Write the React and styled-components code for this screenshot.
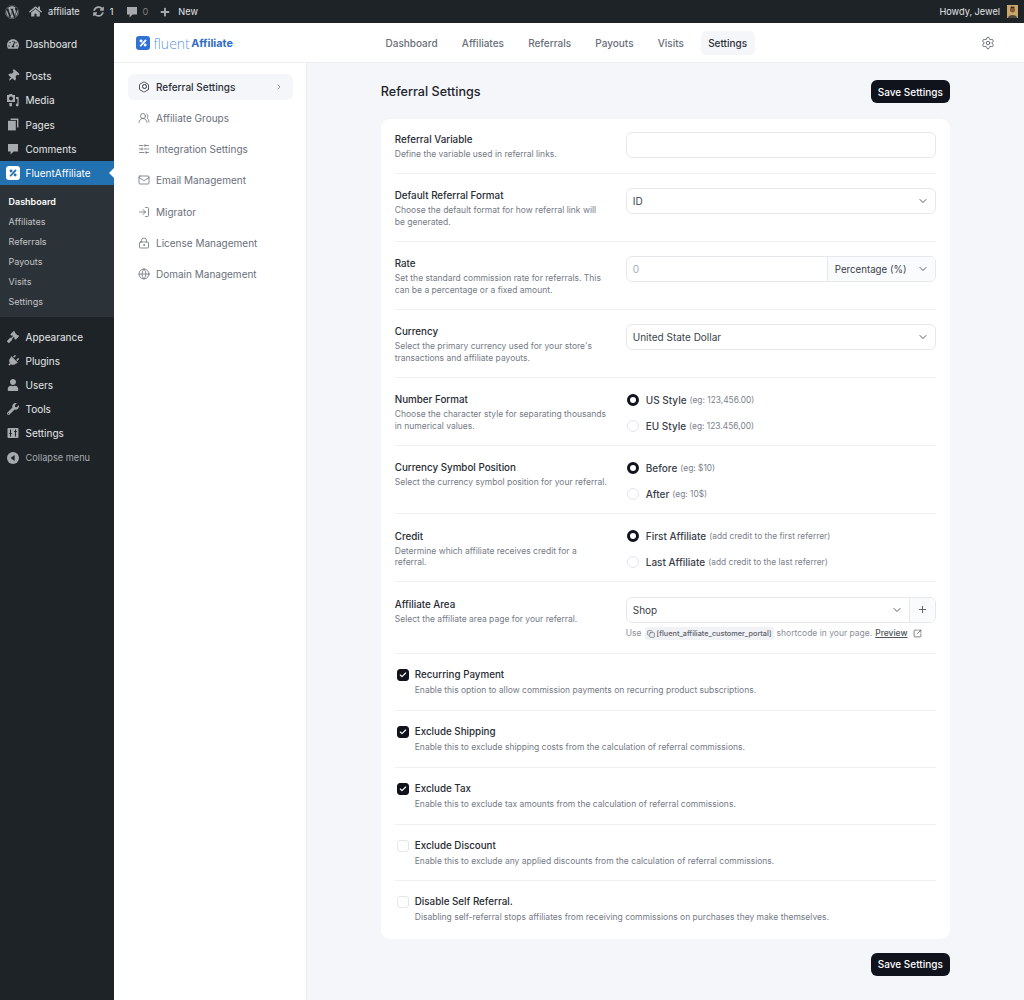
import React from 'react';
import styled, { createGlobalStyle } from 'styled-components';
import {
  FaWordpress, FaHome, FaSyncAlt, FaPlus, FaTachometerAlt, FaThumbtack,
  FaPlug, FaUser, FaWrench, FaGavel,
} from 'react-icons/fa';
import {
  ChevronDown, ChevronRight, Check, Copy, Globe, Hexagon, LockKeyhole, LogIn, Mail, Plus, Settings,
  SlidersHorizontal, SquareArrowOutUpRight, UsersRound,
} from 'lucide-react';

const GlobalStyle = createGlobalStyle`
  html, body { margin: 0; padding: 0; background: #f4f6fa; }
  body { font-family: Inter, "Noto Sans", sans-serif; }
  * { box-sizing: border-box; }
`;

const PercentMark = ({ size = 16, color = '#fff', bg = '#2f72d6' }) => (
  <svg width={size} height={size} viewBox="0 0 16 16">
    <rect width="16" height="16" rx="3.5" fill={bg} />
    <circle cx="5.8" cy="5.8" r="1.7" fill={color} />
    <circle cx="10.4" cy="10.4" r="1.7" fill={color} />
    <path d="M10.6 3.8 L12.2 5 L5.6 12.2 L4 11 Z" fill={color} />
  </svg>
);

const CollapseIcon = () => (
  <svg width="12" height="12" viewBox="0 0 12 12">
    <circle cx="6" cy="6" r="6" fill="#a7aaad" />
    <path d="M7.6 3 L7.6 9 L3.6 6 Z" fill="#1d2327" />
  </svg>
);

const SettingsBoxIcon = () => (
  <svg width="12" height="12" viewBox="0 0 12 12">
    <rect x="0.5" y="1" width="11" height="10" rx="1" fill="#a7aaad" />
    <path d="M3.5 2.5 V9.5 M8.5 2.5 V9.5 M2.2 6.5 H4.8 M7.2 4.5 H9.8" stroke="#1d2327" strokeWidth="1" />
  </svg>
);

const BubbleIcon = ({ size = 12 }) => (
  <svg width={size} height={size} viewBox="0 0 12 12" fill="currentColor">
    <path d="M1 1 H11 V8.6 H6.6 L3.6 11.6 V8.6 H1 Z" />
  </svg>
);

const MediaIcon = () => (
  <svg width="13" height="13" viewBox="0 0 13 13" fill="#a7aaad">
    <path fillRule="evenodd" d="M1 1 H3 L3.6 0 H6 L6.6 1 H9 V8 H1 Z M5 2.6 A1.9 1.9 0 1 0 5 6.4 A1.9 1.9 0 1 0 5 2.6 Z" />
    <path d="M10 3 H12.6 V11 A1.4 1.4 0 1 1 11.4 9.6 V5 H10 Z" />
    <path d="M3 9 H6 V11 A1.4 1.4 0 1 1 4.8 9.8 H3 Z" />
  </svg>
);

const PagesIcon = () => (
  <svg width="12" height="13" viewBox="0 0 12 13" fill="#a7aaad">
    <path d="M3.6 0.5 H11.4 V9.6 H10 V2 H3.6 Z" />
    <path d="M1 2.8 H8.8 V12.4 H1 Z" />
  </svg>
);

const PinIcon = styled(FaThumbtack)`
  transform: rotate(40deg);
`;

const PlugIcon = styled(FaPlug)`
  transform: rotate(45deg);
`;

const Avatar = () => (
  <svg width="11" height="13" viewBox="0 0 11 13">
    <rect width="11" height="13" fill="#c9a86a" />
    <circle cx="5.5" cy="4.8" r="2.6" fill="#8a5a3a" />
    <rect x="3.6" y="1.6" width="3.8" height="1.6" fill="#3b2a1f" />
    <path d="M1 13 C1 9 10 9 10 13 Z" fill="#4b4a3f" />
  </svg>
);

const topMenu = [
  { label: 'Dashboard', Icon: FaTachometerAlt, gapAfter: true },
  { label: 'Posts', Icon: PinIcon },
  { label: 'Media', Icon: MediaIcon },
  { label: 'Pages', Icon: PagesIcon },
  { label: 'Comments', Icon: BubbleIcon },
];

const lowerMenu = [
  { label: 'Appearance', Icon: FaGavel },
  { label: 'Plugins', Icon: PlugIcon },
  { label: 'Users', Icon: FaUser },
  { label: 'Tools', Icon: FaWrench },
  { label: 'Settings', Icon: SettingsBoxIcon },
];

const subMenu = ['Dashboard', 'Affiliates', 'Referrals', 'Payouts', 'Visits', 'Settings'];
const navItems = ['Dashboard', 'Affiliates', 'Referrals', 'Payouts', 'Visits', 'Settings'];

const settingsNav = [
  { label: 'Referral Settings', Icon: Hexagon, active: true },
  { label: 'Affiliate Groups', Icon: UsersRound },
  { label: 'Integration Settings', Icon: SlidersHorizontal },
  { label: 'Email Management', Icon: Mail },
  { label: 'Migrator', Icon: LogIn },
  { label: 'License Management', Icon: LockKeyhole },
  { label: 'Domain Management', Icon: Globe },
];

const toggles = [
  { title: 'Recurring Payment', desc: 'Enable this option to allow commission payments on recurring product subscriptions.', checked: true },
  { title: 'Exclude Shipping', desc: 'Enable this to exclude shipping costs from the calculation of referral commissions.', checked: true },
  { title: 'Exclude Tax', desc: 'Enable this to exclude tax amounts from the calculation of referral commissions.', checked: true },
  { title: 'Exclude Discount', desc: 'Enable this to exclude any applied discounts from the calculation of referral commissions.' },
  { title: 'Disable Self Referral.', desc: 'Disabling self-referral stops affiliates from receiving commissions on purchases they make themselves.' },
];

const RadioGroup = ({ options }) => (
  <Radios>
    {options.map((o, i) => (
      <RadioRow key={o.label}>
        <RadioDot selected={i === 0} />
        <RadioLabel>{o.label}</RadioLabel>
        <RadioHint>{o.hint}</RadioHint>
      </RadioRow>
    ))}
  </Radios>
);

const Field = ({ title, desc, children }) => (
  <Row>
    <FieldText>
      <Title>{title}</Title>
      <Desc>{desc}</Desc>
    </FieldText>
    <Control>{children}</Control>
  </Row>
);

const SelectBox = ({ value }) => (
  <Select>
    <span>{value}</span>
    <ChevronDown size={12} color="#555b66" />
  </Select>
);

export default function App() {
  return (
    <>
      <GlobalStyle />
      <AdminBar>
        <BarGroup>
          <BarIcon $w={14}><FaWordpress size={14} /></BarIcon>
          <BarIcon $w={13} $ml={10}><FaHome size={13} /></BarIcon>
          <BarText $ml={6}>affiliate</BarText>
          <BarIcon $w={12} $ml={13}><FaSyncAlt size={11} /></BarIcon>
          <BarText $ml={5}>1</BarText>
          <BarIcon $w={12} $ml={13}><BubbleIcon size={12} /></BarIcon>
          <BarDim $ml={4}>0</BarDim>
          <BarIcon $w={11} $ml={11.5}><FaPlus size={10} /></BarIcon>
          <BarText $ml={7.5}>New</BarText>
        </BarGroup>
        <BarGroup>
          <BarText>Howdy, Jewel</BarText>
          <AvatarWrap><Avatar /></AvatarWrap>
        </BarGroup>
      </AdminBar>
      <Shell>
        <WpSidebar>
          <MenuList>
            {topMenu.map(({ label, Icon, gapAfter }) => (
              <MenuItem key={label} $gapAfter={gapAfter}>
                <MenuIcon><Icon size={12} /></MenuIcon>
                {label}
              </MenuItem>
            ))}
            <ActiveItem>
              <MenuIcon><PercentMark size={14} color="#2271b1" bg="#fff" /></MenuIcon>
              FluentAffiliate
            </ActiveItem>
            <SubMenu>
              {subMenu.map((s, i) => <SubItem key={s} $current={i === 0}>{s}</SubItem>)}
            </SubMenu>
            {lowerMenu.map(({ label, Icon }) => (
              <MenuItem key={label}>
                <MenuIcon><Icon size={12} /></MenuIcon>
                {label}
              </MenuItem>
            ))}
            <CollapseItem>
              <MenuIcon><CollapseIcon /></MenuIcon>
              Collapse menu
            </CollapseItem>
          </MenuList>
        </WpSidebar>
        <Main>
          <TopNav>
            <Logo>
              <PercentMark size={14} />
              <LogoThin>fluent</LogoThin>
              <LogoBold>Affiliate</LogoBold>
            </Logo>
            <NavList>
              {navItems.map((n) => <NavItem key={n} $active={n === 'Settings'}>{n}</NavItem>)}
            </NavList>
            <GearButton><Settings size={14} strokeWidth={1.5} /></GearButton>
          </TopNav>
          <Body>
            <SettingsSide>
              {settingsNav.map(({ label, Icon, active }) => (
                <SideItem key={label} $active={active}>
                  <SideIcon>
                    <Icon size={14} strokeWidth={1.6} />
                    {active && <HexDot />}
                  </SideIcon>
                  <SideLabel>{label}</SideLabel>
                  {active && <ChevronRight size={8} strokeWidth={2} color="#777" />}
                </SideItem>
              ))}
            </SettingsSide>
            <Content>
              <Panel>
                <PanelHead>
                  <PageTitle>Referral Settings</PageTitle>
                  <SaveButton type="button">Save Settings</SaveButton>
                </PanelHead>
                <Card>
                  <Field title="Referral Variable" desc="Define the variable used in referral links.">
                    <TextInput />
                  </Field>
                  <Field title="Default Referral Format" desc="Choose the default format for how referral link will be generated.">
                    <SelectBox value="ID" />
                  </Field>
                  <Field title="Rate" desc="Set the standard commission rate for referrals. This can be a percentage or a fixed amount.">
                    <Joined>
                      <JoinedMain $muted>0</JoinedMain>
                      <JoinedSide $w={108}>
                        <span>Percentage (%)</span>
                        <ChevronDown size={12} color="#555b66" />
                      </JoinedSide>
                    </Joined>
                  </Field>
                  <Field title="Currency" desc="Select the primary currency used for your store's transactions and affiliate payouts.">
                    <SelectBox value="United State Dollar" />
                  </Field>
                  <Field title="Number Format" desc="Choose the character style for separating thousands in numerical values.">
                    <RadioGroup options={[
                      { label: 'US Style', hint: '(eg: 123,456.00)' },
                      { label: 'EU Style', hint: '(eg: 123.456,00)' },
                    ]} />
                  </Field>
                  <Field title="Currency Symbol Position" desc="Select the currency symbol position for your referral.">
                    <RadioGroup options={[
                      { label: 'Before', hint: '(eg: $10)' },
                      { label: 'After', hint: '(eg: 10$)' },
                    ]} />
                  </Field>
                  <Field title="Credit" desc="Determine which affiliate receives credit for a referral.">
                    <RadioGroup options={[
                      { label: 'First Affiliate', hint: '(add credit to the first referrer)' },
                      { label: 'Last Affiliate', hint: '(add credit to the last referrer)' },
                    ]} />
                  </Field>
                  <Field title="Affiliate Area" desc="Select the affiliate area page for your referral.">
                    <Joined>
                      <JoinedMain>
                        <span>Shop</span>
                        <ChevronDown size={12} color="#555b66" />
                      </JoinedMain>
                      <JoinedSide $w={26} $center><Plus size={11} color="#555b66" /></JoinedSide>
                    </Joined>
                    <Help>
                      Use
                      <Code><Copy size={8} />[fluent_affiliate_customer_portal]</Code>
                      shortcode in your page.
                      <PreviewLink>Preview</PreviewLink>
                      <SquareArrowOutUpRight size={9} color="#555b66" />
                    </Help>
                  </Field>
                  {toggles.map((t) => (
                    <ToggleRow key={t.title}>
                      <CheckBox $checked={t.checked}>
                        {t.checked && <Check size={8} strokeWidth={3.5} color="#fff" />}
                      </CheckBox>
                      <div>
                        <Title>{t.title}</Title>
                        <ToggleDesc>{t.desc}</ToggleDesc>
                      </div>
                    </ToggleRow>
                  ))}
                </Card>
                <PanelFoot>
                  <SaveButton type="button">Save Settings</SaveButton>
                </PanelFoot>
              </Panel>
            </Content>
          </Body>
        </Main>
      </Shell>
    </>
  );
}

const AdminBar = styled.header`
  height: 23px;
  background: #1d2327;
  display: flex;
  align-items: center;
  justify-content: space-between;
  padding: 0 6px 0 5px;
`;

const BarGroup = styled.div`
  display: flex;
  align-items: center;
`;

const BarIcon = styled.span`
  display: flex;
  justify-content: center;
  width: ${(p) => p.$w}px;
  margin-left: ${(p) => p.$ml || 0}px;
  color: #a7aaad;
`;

const BarText = styled.span`
  margin-left: ${(p) => p.$ml || 0}px;
  font-size: 9.2px;
  color: #e4e5e7;
`;

const BarDim = styled(BarText)`
  color: #7d8186;
`;

const AvatarWrap = styled.span`
  display: flex;
  margin-left: 7px;
`;

const Shell = styled.div`
  display: flex;
  min-height: 977px;
`;

const WpSidebar = styled.nav`
  width: 113.5px;
  flex: none;
  background: #1d2327;
  padding-top: 9px;
`;

const MenuList = styled.div`
  display: flex;
  flex-direction: column;
`;

const MenuItem = styled.div`
  display: flex;
  align-items: center;
  height: 24.2px;
  margin-bottom: ${(p) => (p.$gapAfter ? 8 : 0)}px;
  font-size: 10px;
  color: #e6e7e8;
`;

const ActiveItem = styled(MenuItem)`
  position: relative;
  background: #2271b1;
  color: #fff;
  &::after {
    content: '';
    position: absolute;
    right: 0;
    top: 50%;
    margin-top: -5px;
    border: 5px solid transparent;
    border-right-color: #fff;
    border-left-width: 0;
  }
`;

const CollapseItem = styled(MenuItem)`
  font-size: 9.2px;
  color: #a7aaad;
`;

const MenuIcon = styled.span`
  width: 25.5px;
  flex: none;
  display: flex;
  justify-content: center;
  color: #a7aaad;
`;

const SubMenu = styled.div`
  background: #2c3338;
  padding: 6px 0;
  margin-bottom: 7.5px;
`;

const SubItem = styled.div`
  height: 20px;
  display: flex;
  align-items: center;
  padding-left: 8.5px;
  font-size: 9px;
  font-weight: ${(p) => (p.$current ? 600 : 400)};
  color: ${(p) => (p.$current ? '#fff' : '#c3c4c7')};
`;

const Main = styled.main`
  flex: 1;
  min-width: 0;
  display: flex;
  flex-direction: column;
`;

const TopNav = styled.div`
  height: 40px;
  background: #fff;
  border-bottom: 1px solid #eceef2;
  display: flex;
  align-items: center;
  padding: 0 29px 0 22.5px;
`;

const Logo = styled.div`
  display: flex;
  align-items: center;
  width: 242px;
  flex: none;
  padding-top: 1px;
`;

const LogoThin = styled.span`
  margin-left: 3.5px;
  font-family: "Open Sans", Inter, sans-serif;
  font-size: 14px;
  font-weight: 300;
  color: #5f9bdc;
`;

const LogoBold = styled.span`
  margin-left: 1.5px;
  font-size: 10.8px;
  font-weight: 700;
  color: #2f6dc6;
`;

const NavList = styled.div`
  flex: 1;
  display: flex;
  gap: 9.2px;
`;

const NavItem = styled.div`
  padding: 0 7.5px;
  height: 24px;
  display: flex;
  align-items: center;
  border-radius: 5px;
  font-size: 10px;
  font-weight: 500;
  background: ${(p) => (p.$active ? '#f4f6fa' : 'transparent')};
  color: ${(p) => (p.$active ? '#2b2f38' : '#6a707b')};
`;

const GearButton = styled.span`
  display: flex;
  color: #565c67;
`;

const Body = styled.div`
  flex: 1;
  display: flex;
`;

const SettingsSide = styled.aside`
  width: 193px;
  flex: none;
  background: #fff;
  border-right: 1px solid #eceef2;
  padding: 10.5px 13px 0 14.5px;
  display: flex;
  flex-direction: column;
  gap: 5.3px;
`;

const SideItem = styled.div`
  height: 26px;
  display: flex;
  align-items: center;
  gap: 6px;
  padding: 0 10px;
  border-radius: 6px;
  background: ${(p) => (p.$active ? '#f5f6fa' : 'transparent')};
  color: ${(p) => (p.$active ? '#2b2f38' : '#6a707b')};
  font-size: 10px;
  font-weight: ${(p) => (p.$active ? 500 : 400)};
`;

const SideIcon = styled.span`
  position: relative;
  display: flex;
  width: 12px;
  justify-content: center;
`;

const HexDot = styled.span`
  position: absolute;
  left: 50%;
  top: 50%;
  width: 5px;
  height: 5px;
  margin: -2.5px 0 0 -2.5px;
  border: 1.2px solid currentColor;
  border-radius: 50%;
`;

const SideLabel = styled.span`
  flex: 1;
`;

const Content = styled.section`
  flex: 1;
  min-width: 0;
  display: flex;
  justify-content: center;
`;

const Panel = styled.div`
  width: 569px;
  padding-top: 17px;
`;

const PanelHead = styled.div`
  display: flex;
  align-items: center;
  justify-content: space-between;
  margin-bottom: 15.5px;
`;

const PanelFoot = styled.div`
  display: flex;
  justify-content: flex-end;
  margin-top: 14px;
`;

const PageTitle = styled.h1`
  margin: 0;
  font-size: 12.6px;
  font-weight: 500;
  color: #1f232b;
`;

const SaveButton = styled.button`
  height: 23px;
  width: 79px;
  padding: 0;
  border: 0;
  border-radius: 6px;
  background: #10131c;
  color: #fff;
  font-family: inherit;
  font-size: 10px;
  font-weight: 500;
`;

const Card = styled.div`
  background: #fff;
  border-radius: 9px;
  padding: 0 14px;
`;

const Row = styled.div`
  display: grid;
  grid-template-columns: 231px 310px;
  padding: 14.5px 0 12.5px;
  border-bottom: 1px solid #eef0f3;
  &:first-child { padding-top: 13px; }
`;

const FieldText = styled.div`
  padding: 1px 17.5px 0 0;
`;

const Title = styled.div`
  font-size: 9.8px;
  line-height: 14px;
  font-weight: 500;
  color: #272b33;
`;

const Desc = styled.div`
  margin-top: 2px;
  font-size: 8.5px;
  line-height: 11.5px;
  color: #757b86;
`;

const ToggleDesc = styled(Desc)`
  margin-top: 3px;
`;

const Control = styled.div`
  min-width: 0;
`;

const TextInput = styled.div`
  height: 26px;
  background: #fff;
  border: 1px solid #e6e8ee;
  border-radius: 6px;
`;

const Select = styled(TextInput)`
  display: flex;
  align-items: center;
  justify-content: space-between;
  padding: 0 6px;
  font-size: 10px;
  color: #3a3f4b;
`;

const Joined = styled.div`
  display: flex;
  height: 26px;
  border: 1px solid #e6e8ee;
  border-radius: 6px;
  font-size: 10px;
  color: #3a3f4b;
  overflow: hidden;
`;

const JoinedMain = styled.div`
  flex: 1;
  display: flex;
  align-items: center;
  justify-content: space-between;
  padding: 0 6px;
  color: ${(p) => (p.$muted ? '#a8adb6' : '#3a3f4b')};
`;

const JoinedSide = styled.div`
  width: ${(p) => p.$w}px;
  flex: none;
  display: flex;
  align-items: center;
  justify-content: ${(p) => (p.$center ? 'center' : 'space-between')};
  padding: ${(p) => (p.$center ? 0 : '0 6px 0 7px')};
  border-left: 1px solid #e6e8ee;
  background: #fafbfc;
  font-size: 9.7px;
`;

const Help = styled.div`
  display: flex;
  align-items: center;
  gap: 3px;
  margin: 4.5px 0 0.5px;
  font-size: 8.5px;
  line-height: 11px;
  color: #8a8f99;
`;

const Code = styled.span`
  display: inline-flex;
  align-items: center;
  gap: 2px;
  padding: 1px 2px;
  border-radius: 3px;
  background: #f1f2f5;
  color: #5d636e;
  font-size: 7.3px;
  font-weight: 500;
`;

const PreviewLink = styled.span`
  color: #4d535e;
  font-weight: 500;
  text-decoration: underline;
  margin-right: 2px;
`;

const Radios = styled.div`
  display: flex;
  flex-direction: column;
  gap: 11px;
  margin-bottom: -0.7px;
`;

const RadioRow = styled.div`
  height: 15px;
  display: flex;
  align-items: center;
`;

const RadioDot = styled.span`
  width: 12px;
  height: 12px;
  margin-left: 1px;
  border-radius: 50%;
  border: ${(p) => (p.selected ? '3.5px solid #10131c' : '1px solid #e4e6ea')};
  background: #fff;
`;

const RadioLabel = styled.span`
  margin-left: 7px;
  font-size: 10px;
  font-weight: 500;
  color: #3a3f4b;
`;

const RadioHint = styled.span`
  margin-left: 3px;
  font-size: 8.4px;
  color: #7c828c;
`;

const ToggleRow = styled.div`
  display: flex;
  gap: 6px;
  padding: 14px 0 13.2px 2px;
  border-bottom: 1px solid #eef0f3;
  &:last-child { border-bottom: 0; padding-bottom: 15px; }
`;

const CheckBox = styled.span`
  width: 12px;
  height: 12px;
  margin-top: 1px;
  flex: none;
  display: flex;
  align-items: center;
  justify-content: center;
  border-radius: 3px;
  background: ${(p) => (p.$checked ? '#10131c' : '#fff')};
  border: 1px solid ${(p) => (p.$checked ? '#10131c' : '#e4e6ea')};
`;
